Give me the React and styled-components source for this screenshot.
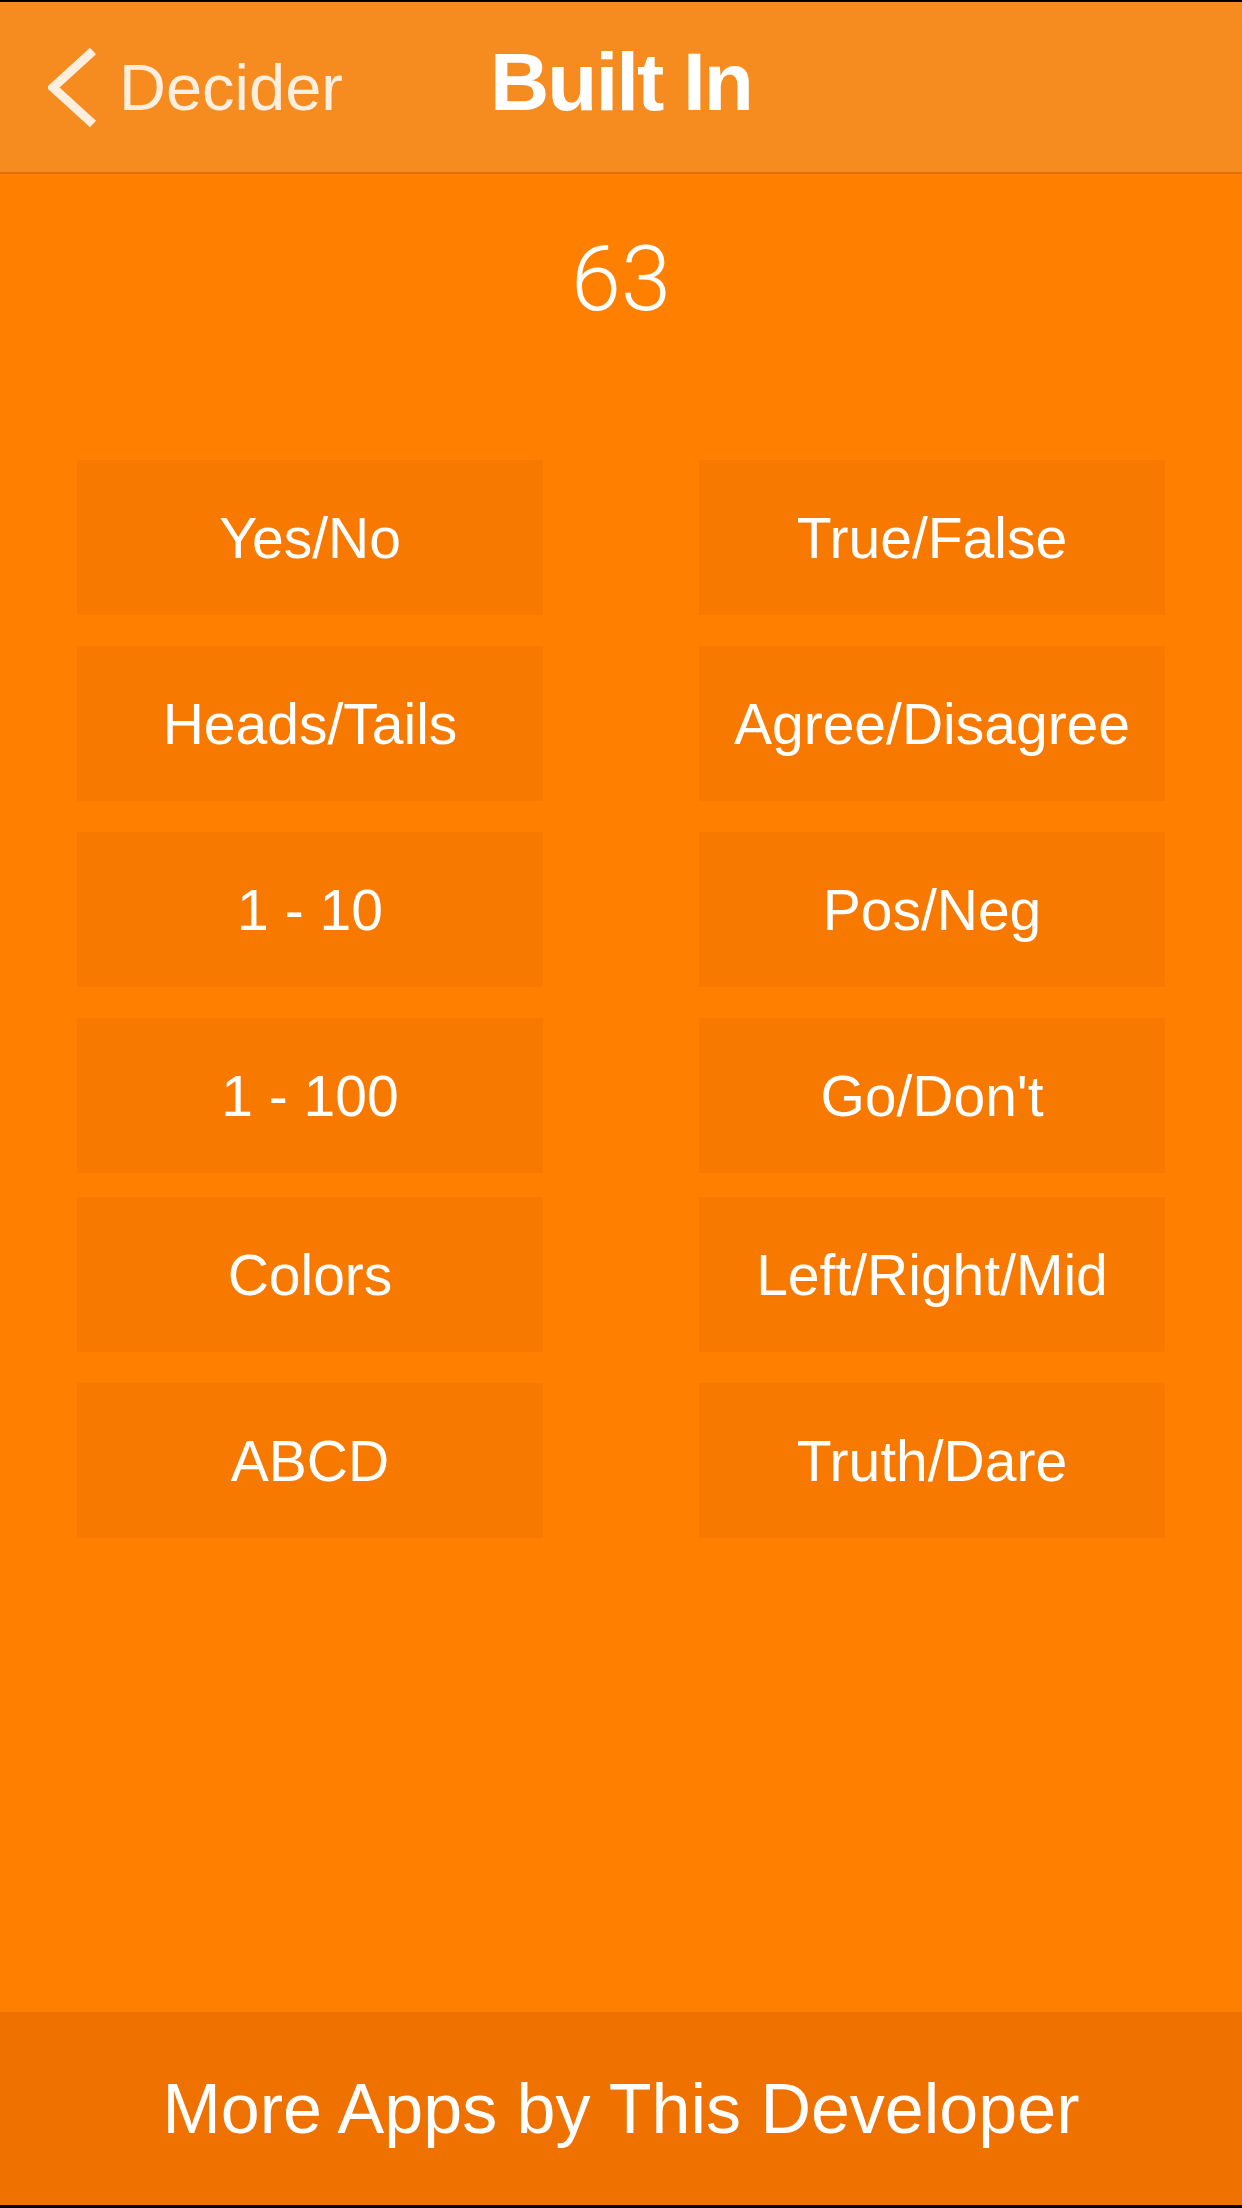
import styled, { createGlobalStyle } from 'styled-components';

const GlobalStyle = createGlobalStyle`
  html, body {
    margin: 0;
    padding: 0;
    background: #000;
  }
  body {
    font-family: "Liberation Sans", Arial, sans-serif;
    -webkit-font-smoothing: antialiased;
  }
`;

const choices = [
  ['Yes/No', 'True/False'],
  ['Heads/Tails', 'Agree/Disagree'],
  ['1 - 10', 'Pos/Neg'],
  ['1 - 100', "Go/Don't"],
  ['Colors', 'Left/Right/Mid'],
  ['ABCD', 'Truth/Dare'],
];

// the fifth row sits a bit closer to the one above it
const rowGaps = [0, 31, 31, 31, 24, 31];

const BackChevron = () => (
  <svg width="49" height="81" viewBox="0 0 49 81" fill="none">
    <polyline
      points="45,4 5,40.5 45,77"
      stroke="#FEEEDD"
      strokeWidth="9"
      strokeLinejoin="miter"
      strokeLinecap="butt"
    />
  </svg>
);

const App = () => {
  return (
    <Screen>
      <GlobalStyle />
      <NavBar>
        <BackButton type="button">
          <BackChevron />
          <BackLabel>Decider</BackLabel>
        </BackButton>
        <NavTitle>Built In</NavTitle>
        <span />
      </NavBar>

      <Main>
        <Result>63</Result>
        <Choices>
          {choices.map((row, i) => (
            <ChoiceRow key={i} $gap={rowGaps[i]}>
              {row.map((label) => (
                <ChoiceButton key={label} type="button">{label}</ChoiceButton>
              ))}
            </ChoiceRow>
          ))}
        </Choices>
      </Main>

      <Footer type="button">More Apps by This Developer</Footer>
    </Screen>
  );
};

const Screen = styled.div`
  box-sizing: border-box;
  width: 1242px;
  height: 2208px;
  display: flex;
  flex-direction: column;
  border-top: 2px solid #000;
  border-bottom: 3px solid #000;
  background: #ff8000;
  overflow: hidden;
`;

const NavBar = styled.header`
  flex: 0 0 170px;
  display: grid;
  grid-template-columns: 1fr auto 1fr;
  align-items: center;
  background: #f68b20;
  border-bottom: 2px solid #e26d06;
`;

const BackButton = styled.button`
  justify-self: start;
  display: flex;
  align-items: center;
  gap: 22px;
  height: 81px;
  padding: 0 0 0 48px;
  border: 0;
  background: none;
  cursor: pointer;

  svg {
    display: block;
    flex-shrink: 0;
  }
`;

const BackLabel = styled.span`
  font-family: "Liberation Sans", Arial, sans-serif;
  font-size: 65px;
  line-height: 65px;
  color: #feeedd;
`;

const NavTitle = styled.h1`
  margin: 0 0 11px;
  font-family: "Liberation Sans", Arial, sans-serif;
  font-size: 82px;
  line-height: 82px;
  font-weight: 700;
  letter-spacing: -2px;
  color: #fff;
`;

const Main = styled.main`
  flex: 1;
  display: flex;
  flex-direction: column;
  padding-top: 56px;
  background: #ff8000;
`;

const Result = styled.div`
  height: 100px;
  font-family: Roboto, "Liberation Sans", Arial, sans-serif;
  font-size: 90px;
  line-height: 100px;
  font-weight: 300;
  text-align: center;
  color: #fff;
`;

const Choices = styled.div`
  display: flex;
  flex-direction: column;
  margin-top: 130px;
  padding: 0 77px;
`;

const ChoiceRow = styled.div`
  display: grid;
  grid-template-columns: 466px 466px;
  column-gap: 156px;
  margin-top: ${(p) => p.$gap}px;
`;

const ChoiceButton = styled.button`
  height: 155px;
  display: flex;
  align-items: center;
  justify-content: center;
  padding: 0;
  border: 0;
  background: #f77900;
  font-family: "Liberation Sans", Arial, sans-serif;
  font-size: 57px;
  color: #fff;
  cursor: pointer;
`;

const Footer = styled.button`
  flex: 0 0 193px;
  display: flex;
  align-items: center;
  justify-content: center;
  padding: 0;
  border: 0;
  background: #ef7100;
  font-family: "Liberation Sans", Arial, sans-serif;
  font-size: 70px;
  line-height: 70px;
  color: #fff;
  cursor: pointer;
`;

export default App;
